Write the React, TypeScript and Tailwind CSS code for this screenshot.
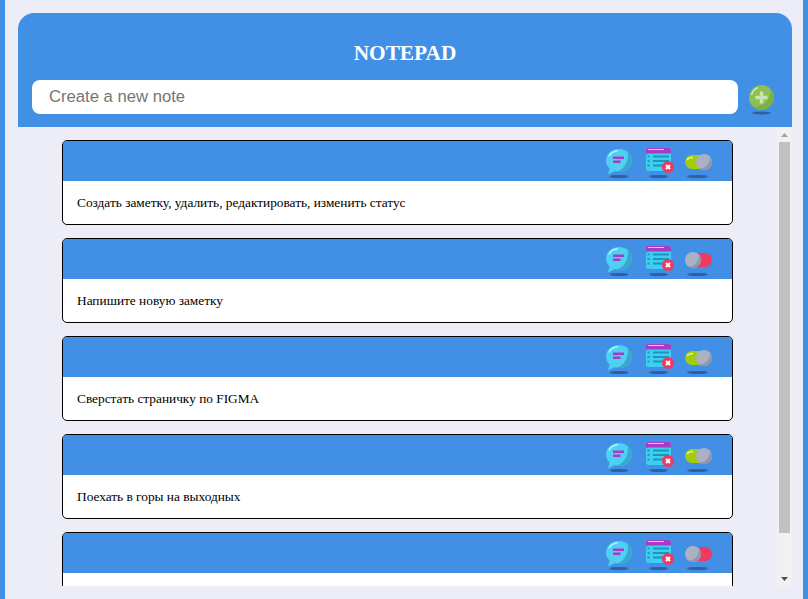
const notes = [
  { text: "Создать заметку, удалить, редактировать, изменить статус", done: true },
  { text: "Напишите новую заметку", done: false },
  { text: "Сверстать страничку по FIGMA", done: true },
  { text: "Поехать в горы на выходных", done: true },
  { text: "", done: false },
];

function ChatIcon() {
  return (
    <svg width="31" height="32" viewBox="0 0 31 32" className="block">
      <ellipse cx="15" cy="28.500" rx="9.500" ry="1.600" fill="#2f5f9e" />
      <path d="M15 1c7.500 0 13 5.200 13 11.500S22.500 24 15 24c-1.700 0-3.300-.3-4.700-.8L4 26.500l1.600-6C3.300 18.500 2 15.700 2 12.500 2 6.200 7.500 1 15 1z" fill="#4fd0f3" />
      <path d="M23.500 3.700c2.800 2.200 4.500 5.300 4.500 8.800C28 18.800 22.500 24 15 24c-1.700 0-3.300-.3-4.700-.8L8 24.500C17 25 26 15 23.500 3.700z" fill="#37a9cd" />
      <path d="M5 8.500C6.500 5 10 3 14 2.800" stroke="#b4f0fd" strokeWidth="1.600" fill="none" />
      <rect x="9" y="8.500" width="11" height="2.500" fill="#a63cc4" />
      <rect x="9" y="12.500" width="7.500" height="2.500" fill="#a63cc4" />
    </svg>
  );
}

function ListIcon() {
  return (
    <svg width="30" height="32" viewBox="0 0 30 32" className="block">
      <ellipse cx="14.500" cy="28.500" rx="9.500" ry="1.600" fill="#2f5f9e" />
      <rect x="2" y="0" width="25" height="23" rx="2.500" fill="#3fcdf1" />
      <path d="M2 7V2.500A2.500 2.500 0 0 1 4.500 0h20A2.500 2.500 0 0 1 27 2.500V5.500H3.500A1.500 1.500 0 0 0 2 7z" fill="#a63cc4" />
      <rect x="4" y="1" width="16" height="1" fill="#e4c0f0" />
      <rect x="9" y="7.500" width="16" height="2" fill="#1b97bb" />
      <rect x="9" y="12" width="16" height="2" fill="#1b97bb" />
      <rect x="9" y="16.500" width="11" height="2" fill="#1b97bb" />
      <rect x="3.500" y="7.500" width="2" height="2" fill="#1b97bb" />
      <rect x="3.500" y="12" width="2" height="2" fill="#1b97bb" />
      <rect x="3.500" y="16.500" width="2" height="2" fill="#1b97bb" />
      <circle cx="24" cy="19" r="6" fill="#f2385f" />
      <path d="M22 17l4 4M26 17l-4 4" stroke="#ffffff" strokeWidth="2" />
    </svg>
  );
}

function ToggleIcon({ done }: { done: boolean }) {
  return (
    <svg width="30" height="32" viewBox="0 0 30 32" className="block">
      <ellipse cx="14.500" cy="28.500" rx="10.500" ry="1.600" fill="#2f5f9e" />
      {done ? (
        <>
          <rect x="2" y="7" width="23" height="14" rx="7" fill="#a3cc0a" />
          <path d="M4 12c1-1.500 3-2.500 6-2.500" stroke="#e2f2a4" strokeWidth="1.300" fill="none" />
          <circle cx="21" cy="14" r="8" fill="#aab1c5" />
          <path d="M27 8.700A8 8 0 0 1 16 20.300c5 1 11-3.500 11-11.600z" fill="#8f96ad" />
        </>
      ) : (
        <>
          <rect x="6" y="7" width="23" height="14" rx="7" fill="#f2385f" />
          <circle cx="10" cy="14" r="8" fill="#aab1c5" />
          <path d="M16 8.700A8 8 0 0 1 5 20.300c5 1 11-3.500 11-11.600z" fill="#8f96ad" />
        </>
      )}
    </svg>
  );
}

function PlusIcon() {
  return (
    <svg width="25" height="30" viewBox="0 0 25 30" className="block">
      <ellipse cx="12.500" cy="28" rx="9.500" ry="1.400" fill="#2f5f9e" />
      <circle cx="12.500" cy="12.500" r="12.500" fill="#8cc152" />
      <path d="M21.300 3.600A12.500 12.500 0 0 1 3.600 21.300C12 24 23.500 15 21.300 3.600z" fill="#7bb044" />
      <path d="M2.500 10C3.300 6.500 5.500 4 9 2.700" stroke="#cfe8b6" strokeWidth="1.500" fill="none" />
      <path d="M12.500 6.500v12M6.500 12.500h12" stroke="#c9e6ae" strokeWidth="3.500" />
    </svg>
  );
}

export default function App() {
  return (
    <div className="h-[599px] w-[808px] overflow-hidden border-x-[5px] border-[#4190e6] bg-[#ecedf6] pt-[13px] pr-[11px] pl-[13px]">
      <header className="flex h-[114px] flex-col rounded-t-2xl bg-[#4190e6] px-[14px]">
        <h1 className="mt-[27px] text-center font-['Liberation_Serif',serif] text-[21.33px] leading-[26px] font-bold text-white">
          NOTEPAD
        </h1>
        <div className="mt-[14px] flex items-start">
          <input
            placeholder="Create a new note"
            className="h-[34px] w-[706px] rounded-lg bg-white px-[17px] font-['Liberation_Sans',sans-serif] text-[16.67px] text-black outline-none placeholder:text-[#757575]"
          />
          <button className="mt-[5px] ml-[11px]">
            <PlusIcon />
          </button>
        </div>
      </header>

      <main className="flex h-[459px]">
        <div className="flex-1 overflow-hidden px-[44px] pt-[13px]">
          <ul className="flex flex-col gap-[13px]">
            {notes.map((note, i) => (
              <li
                key={i}
                className="h-[85px] w-[671px] shrink-0 overflow-hidden rounded-[5px] border border-black bg-white"
              >
                <div className="flex h-10 items-start justify-end gap-[9px] bg-[#4190e6] pt-[7px] pr-[19px]">
                  <ChatIcon />
                  <ListIcon />
                  <ToggleIcon done={note.done} />
                </div>
                <p className="pt-[14px] pl-[14px] font-['Liberation_Serif',serif] text-[13.33px] leading-[16px] text-black">
                  {note.text}
                </p>
              </li>
            ))}
          </ul>
        </div>

        {/* scrollbar */}
        <div className="flex w-[15px] flex-col items-center bg-[#f1f1f1]">
          <div className="flex h-[15px] items-center justify-center">
            <svg width="7" height="4" viewBox="0 0 7 4" className="block">
              <path d="M3.500 0L7 4H0z" fill="#a3a3a3" />
            </svg>
          </div>
          <div className="h-[391px] w-[11px] bg-[#c1c1c1]" />
          <div className="mt-auto flex h-[15px] items-center justify-center">
            <svg width="7" height="4" viewBox="0 0 7 4" className="block">
              <path d="M0 0h7L3.500 4z" fill="#505050" />
            </svg>
          </div>
        </div>
      </main>
    </div>
  );
}
